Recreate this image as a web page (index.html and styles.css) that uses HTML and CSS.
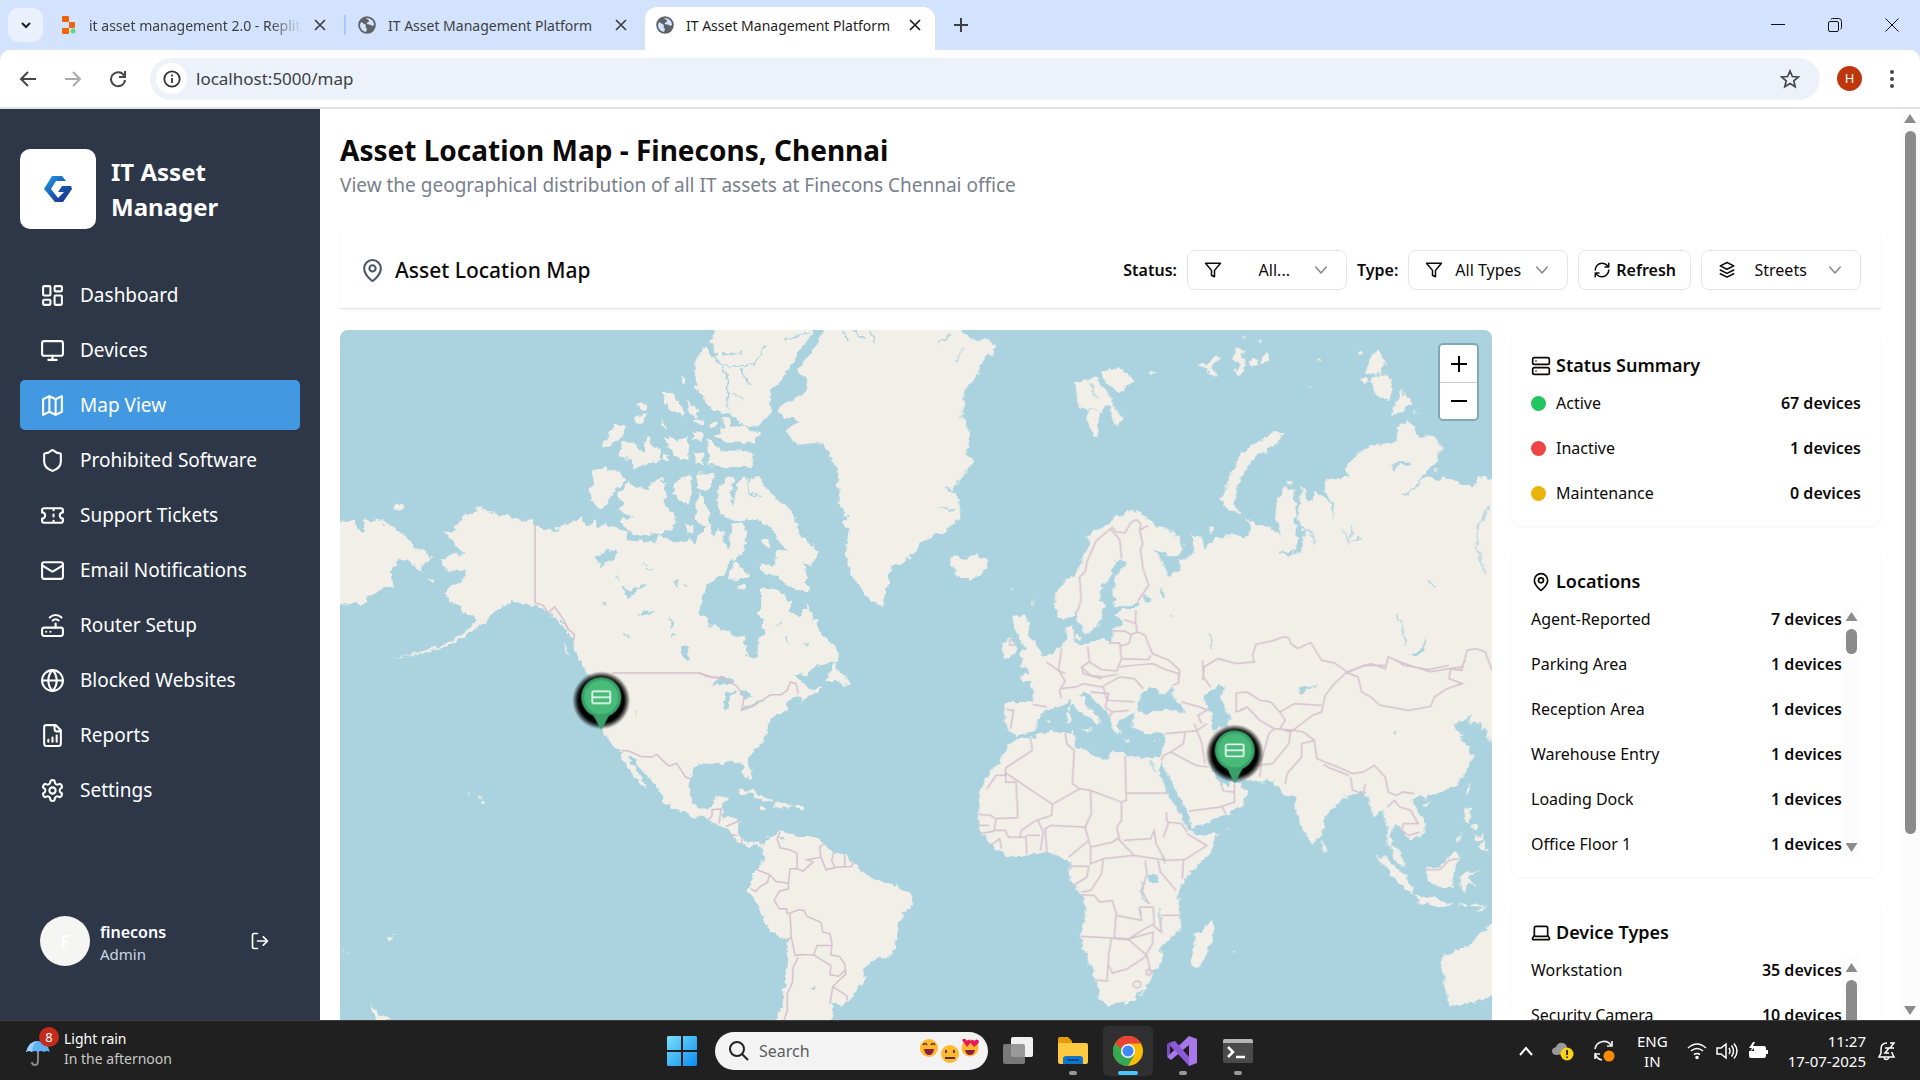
FILE: index.html
```html
<!DOCTYPE html>
<html lang="en">
<head>
<meta charset="utf-8">
<title>IT Asset Management Platform</title>
<link rel="stylesheet" href="styles.css">
</head>
<body>
<svg class="defs" aria-hidden="true">
  <symbol id="globe-fill" viewBox="0 0 18 18"><circle cx="9" cy="9" r="8.8" fill="#5f6368"/><path d="M3 6c2 1 3 2 5 3-1 2 0 3 1 4l-1 3C4 15 2 12 2 9zM8 2c1 2 3 1 3 3S8 6 9 8c2 1 4 0 5 2l2-1c0-4-3-7-8-7z" fill="#d3e3fd"/></symbol>
  <symbol id="close" viewBox="0 0 12 12"><path d="M1 1l10 10M11 1L1 11" fill="none" stroke="currentColor" stroke-width="1.7"/></symbol>
  <symbol id="pin" viewBox="0 0 24 24"><path d="M20 10c0 5-5.500 10.200-7.400 11.800a1 1 0 0 1-1.200 0C9.500 20.200 4 15 4 10a8 8 0 0 1 16 0z"/><circle cx="12" cy="10" r="3"/></symbol>
  <symbol id="funnel" viewBox="0 0 24 24"><path d="M22 3H2l8 9.500V19l4 2v-8.500z"/></symbol>
  <symbol id="chev" viewBox="0 0 24 24"><path d="m5 8 7 8 7-8"/></symbol>
</svg>

<header class="browser">
  <div class="tabs">
    <button class="tab-search" aria-label="Search tabs"><svg width="12" height="12" viewBox="0 0 12 12"><path d="m2 4 4 4 4-4" fill="none" stroke="#1f1f1f" stroke-width="2"/></svg></button>
    <div class="tab">
      <svg width="16" height="18" viewBox="0 0 16 18"><path d="M2 0h5q1 0 1 1v5H2q-1 0-1-1V1q0-1 1-1zM8 6h5q1 0 1 1v4q0 1-1 1H8zM2 12h6v5q0 1-1 1H2q-1 0-1-1v-4q0-1 1-1z" fill="#f26207"/><circle cx="12" cy="15" r="2.500" fill="#5fd97a"/></svg>
      <span class="tab-title fade">it asset management 2.0 - Replit</span>
      <button aria-label="Close tab"><svg width="12" height="12"><use href="#close"/></svg></button>
    </div>
    <div class="tab divided">
      <svg width="18" height="18"><use href="#globe-fill"/></svg>
      <span class="tab-title">IT Asset Management Platform</span>
      <button aria-label="Close tab"><svg width="12" height="12"><use href="#close"/></svg></button>
    </div>
    <div class="tab active">
      <svg width="18" height="18"><use href="#globe-fill"/></svg>
      <span class="tab-title">IT Asset Management Platform</span>
      <button aria-label="Close tab"><svg width="12" height="12"><use href="#close"/></svg></button>
    </div>
    <button class="new-tab" aria-label="New tab"><svg width="14" height="14" viewBox="0 0 14 14"><path d="M7 0v14M0 7h14" stroke="#3c4043" stroke-width="2"/></svg></button>
    <div class="window-controls">
      <button aria-label="Minimize"><svg width="14" height="14" viewBox="0 0 14 14"><path d="M0 6.500h14" stroke="#111"/></svg></button>
      <button aria-label="Restore"><svg width="14" height="14" viewBox="0 0 14 14" fill="none" stroke="#111"><rect x=".5" y="3.500" width="10" height="10" rx="1.500"/><path d="M3 1.500q0-1 1.500-1h6q3 0 3 3v6q0 1.500-1 1.500"/></svg></button>
      <button aria-label="Close"><svg width="14" height="14" viewBox="0 0 14 14"><path d="M.5.5l13 13M13.500.5l-13 13" stroke="#111"/></svg></button>
    </div>
  </div>
  <div class="toolbar">
    <button aria-label="Back"><svg width="18" height="18" viewBox="0 0 18 18" fill="none" stroke="#474747" stroke-width="2"><path d="M17 9H2M9 2 2 9l7 7"/></svg></button>
    <button aria-label="Forward"><svg width="18" height="18" viewBox="0 0 18 18" fill="none" stroke="#aaa" stroke-width="2"><path d="M1 9h15M9 2l7 7-7 7"/></svg></button>
    <button aria-label="Reload"><svg width="18" height="18" viewBox="0 0 18 18" fill="none" stroke="#474747" stroke-width="2"><path d="M15 5.500A7 7 0 1 0 16 10M16 1v6h-6"/></svg></button>
    <div class="omnibox">
      <button class="site-info" aria-label="Site information"><svg width="18" height="18" viewBox="0 0 18 18" fill="none" stroke="#333" stroke-width="1.800"><circle cx="9" cy="9" r="7.700"/><path d="M9 8v5M9 4.500v2"/></svg></button>
      <input type="text" aria-label="Address" value="localhost:5000/map">
      <button aria-label="Bookmark"><svg width="20" height="20" viewBox="0 0 20 20" fill="none" stroke="#474747" stroke-width="1.700"><path d="m10 2 2.400 5.500 6 .5-4.600 3.900 1.400 5.900-5.200-3.200-5.200 3.200 1.400-5.900L1.600 8l6-.5z"/></svg></button>
    </div>
    <button class="profile" aria-label="Profile">H</button>
    <button aria-label="Menu"><svg width="6" height="20" viewBox="0 0 6 20" fill="#474747"><circle cx="3" cy="3" r="2"/><circle cx="3" cy="10" r="2"/><circle cx="3" cy="17" r="2"/></svg></button>
  </div>
</header>

<div class="app">
  <aside class="sidebar">
    <div class="brand">
      <div class="brand-logo">
        <svg width="28" height="28" viewBox="0 0 28 28"><defs><linearGradient id="lg" x1="0" y1="0" x2="1" y2="1"><stop offset="0" stop-color="#1fa0e8"/><stop offset=".6" stop-color="#1b4fa8"/><stop offset="1" stop-color="#122f86"/></linearGradient></defs><path d="M8 1h10l4 5H12l-5 8 7 9 6-6h-6l4-6h9l1 3-9 13h-8L0 14z" fill="url(#lg)"/></svg>
      </div>
      <p class="brand-name">IT Asset<br>Manager</p>
    </div>
    <nav class="nav">
      <a href="#"><svg class="icon" viewBox="0 0 24 24"><rect x="3" y="3" width="7" height="9" rx="1"/><rect x="14" y="3" width="7" height="5" rx="1"/><rect x="14" y="12" width="7" height="9" rx="1"/><rect x="3" y="16" width="7" height="5" rx="1"/></svg>Dashboard</a>
      <a href="#"><svg class="icon" viewBox="0 0 24 24"><rect x="2" y="3" width="20" height="14" rx="2"/><path d="M8 21h8M12 17v4"/></svg>Devices</a>
      <a href="#" class="current" aria-current="page"><svg class="icon" viewBox="0 0 24 24"><path d="m3 6 6-3 6 3 6-3v15l-6 3-6-3-6 3zM9 3v15M15 6v15"/></svg>Map View</a>
      <a href="#"><svg class="icon" viewBox="0 0 24 24"><path d="M20 13c0 5-3.500 7.500-7.660 8.950a1 1 0 0 1-.67-.01C7.500 20.500 4 18 4 13V6a1 1 0 0 1 1-1c2 0 4.500-1.200 6.240-2.720a1.170 1.170 0 0 1 1.520 0C14.510 3.810 17 5 19 5a1 1 0 0 1 1 1z"/></svg>Prohibited Software</a>
      <a href="#"><svg class="icon" viewBox="0 0 24 24"><path d="M2 9a3 3 0 0 1 0 6v2a2 2 0 0 0 2 2h16a2 2 0 0 0 2-2v-2a3 3 0 0 1 0-6V7a2 2 0 0 0-2-2H4a2 2 0 0 0-2 2zM13 5v2M13 17v2M13 11v2"/></svg>Support Tickets</a>
      <a href="#"><svg class="icon" viewBox="0 0 24 24"><rect x="2" y="4" width="20" height="16" rx="2"/><path d="m22 7-8.970 5.700a1.940 1.940 0 0 1-2.060 0L2 7"/></svg>Email Notifications</a>
      <a href="#"><svg class="icon" viewBox="0 0 24 24"><rect x="2" y="14" width="20" height="8" rx="2"/><path d="M6.010 18H6M10.010 18H10M15 10v4M17.840 7.170a4 4 0 0 0-5.660 0M20.660 4.340a8 8 0 0 0-11.310 0"/></svg>Router Setup</a>
      <a href="#"><svg class="icon" viewBox="0 0 24 24"><circle cx="12" cy="12" r="10"/><path d="M12 2a14.500 14.500 0 0 0 0 20 14.500 14.500 0 0 0 0-20M2 12h20"/></svg>Blocked Websites</a>
      <a href="#"><svg class="icon" viewBox="0 0 24 24"><path d="M15 2H6a2 2 0 0 0-2 2v16a2 2 0 0 0 2 2h12a2 2 0 0 0 2-2V7zM14 2v4a2 2 0 0 0 2 2h4M8 18v-2M12 18v-4M16 18v-6"/></svg>Reports</a>
      <a href="#"><svg class="icon" viewBox="0 0 24 24"><path d="M12.220 2h-.44a2 2 0 0 0-2 2v.18a2 2 0 0 1-1 1.730l-.43.25a2 2 0 0 1-2 0l-.15-.08a2 2 0 0 0-2.730.73l-.22.38a2 2 0 0 0 .73 2.730l.15.1a2 2 0 0 1 1 1.720v.51a2 2 0 0 1-1 1.740l-.15.09a2 2 0 0 0-.73 2.730l.22.38a2 2 0 0 0 2.730.73l.15-.08a2 2 0 0 1 2 0l.43.25a2 2 0 0 1 1 1.730V20a2 2 0 0 0 2 2h.44a2 2 0 0 0 2-2v-.18a2 2 0 0 1 1-1.730l.43-.25a2 2 0 0 1 2 0l.15.08a2 2 0 0 0 2.730-.73l.22-.39a2 2 0 0 0-.73-2.730l-.15-.08a2 2 0 0 1-1-1.740v-.5a2 2 0 0 1 1-1.740l.15-.09a2 2 0 0 0 .73-2.730l-.22-.38a2 2 0 0 0-2.730-.73l-.15.08a2 2 0 0 1-2 0l-.43-.25a2 2 0 0 1-1-1.730V4a2 2 0 0 0-2-2z"/><circle cx="12" cy="12" r="3"/></svg>Settings</a>
    </nav>
    <div class="user">
      <span class="user-avatar">F</span>
      <div class="user-info"><strong>finecons</strong><span>Admin</span></div>
      <button class="logout" aria-label="Log out"><svg class="icon small" viewBox="0 0 24 24"><path d="M9 21H5a2 2 0 0 1-2-2V5a2 2 0 0 1 2-2h4M16 17l5-5-5-5M21 12H9"/></svg></button>
    </div>
  </aside>

  <main class="main">
    <h1>Asset Location Map - Finecons, Chennai</h1>
    <p class="subtitle">View the geographical distribution of all IT assets at Finecons Chennai office</p>

    <section class="filters">
      <h2><svg class="icon slate" viewBox="0 0 24 24"><use href="#pin"/></svg>Asset Location Map</h2>
      <label for="status">Status:</label>
      <div class="select"><svg class="icon mini" viewBox="0 0 24 24"><use href="#funnel"/></svg><select id="status" class="end"><option>All...</option></select><svg class="icon mini muted"><use href="#chev"/></svg></div>
      <label for="type">Type:</label>
      <div class="select"><svg class="icon mini" viewBox="0 0 24 24"><use href="#funnel"/></svg><select id="type"><option>All Types</option></select><svg class="icon mini muted"><use href="#chev"/></svg></div>
      <button class="refresh"><svg class="icon mini" viewBox="0 0 24 24"><path d="M3 12a9 9 0 0 1 9-9 9.750 9.750 0 0 1 6.740 2.740L21 8M21 3v5h-5M21 12a9 9 0 0 1-9 9 9.750 9.750 0 0 1-6.740-2.740L3 16M8 16H3v5"/></svg>Refresh</button>
      <div class="select"><svg class="icon mini" viewBox="0 0 24 24"><path d="m12 2 9 4.500-9 4.500-9-4.500zM3 12l9 4.500 9-4.500M3 17l9 4.500 9-4.500"/></svg><select aria-label="Map style"><option>Streets</option></select><svg class="icon mini muted"><use href="#chev"/></svg></div>
    </section>

    <div class="columns">
      <section class="map" aria-label="World map of devices">
        <svg class="map-canvas" viewBox="0 0 1151 750">
          <defs>
            <filter id="coast" x="0" y="0" width="100%" height="100%"><feTurbulence type="fractalNoise" baseFrequency=".14" numOctaves="3" seed="4"/><feDisplacementMap in="SourceGraphic" scale="8" xChannelSelector="R" yChannelSelector="G"/></filter>
            <radialGradient id="glow"><stop offset=".78" stop-color="#000"/><stop offset=".86" stop-color="#000" stop-opacity=".7"/><stop offset="1" stop-color="#000" stop-opacity="0"/></radialGradient>
            <g id="marker"><circle cy="3" r="29" fill="url(#glow)"/><path d="M-8 18h16L0 33z" fill="#38a169"/><circle r="20" fill="#38a169"/><circle r="17" fill="#48bb78"/><g fill="none" stroke="#fff" stroke-width="1.500"><rect x="-9" y="-6" width="18" height="12" rx="1.500"/><path d="M-9 0H9"/></g></g>
          </defs>
          <rect width="1151" height="750" fill="#aad3df"/>
          <g filter="url(#coast)">
            <g transform="scale(.3827 .3333)">
              <g class="land">
                <path d="M-30 582L40 572 45 600 60 605 62 568 110 575 135 590 160 612 190 640 200 658 220 658 240 685 222 697 212 728 195 705 170 695 150 685 148 710 130 720 142 772 120 768 95 785 75 800 55 825 45 818 20 822-30 828Z"/>
                <path d="M135 540L143 523 160 518 170 530 160 540ZM222 745l25 5 2 8-15-4z"/>
                <path d="M272 605L300 603 308 575 325 555 345 542 365 530 385 545 430 555 480 570 500 572 510 582 540 597 560 605 575 590 600 580 622 566 630 555 640 580 650 588 665 570 670 585 700 578 715 592 750 605 752 630 775 635 800 632 825 640 830 610 850 625 875 635 905 632 910 620 925 640 940 610 965 585 975 620 985 595 1000 610 1005 640 1015 650 1025 580 1045 577 1063 600 1060 640 1050 670 1020 690 1010 725 975 755 960 765 945 800 940 850 955 860 962 885 990 892 1020 912 1055 922 1058 960 1078 992 1088 975 1088 930 1105 910 1108 880 1092 850 1100 830 1098 775 1135 773 1160 795 1175 815 1175 845 1200 860 1212 845 1218 815 1230 850 1248 890 1260 915 1290 945 1302 970 1300 985 1270 1000 1230 1010 1190 1015 1160 1055 665 1055 640 1020 628 995 612 965 605 925 585 900 560 860 540 845 510 825 470 822 450 808 425 835 400 845 385 870 350 900 320 925 260 955 200 975 130 985 195 970 260 948 320 910 350 885 355 860 320 850 315 825 285 815 275 790 290 765 325 745 325 722 280 720 262 693 290 675 330 672 310 655 295 630Z"/>
                <path d="M1302 985L1295 1010 1325 1055 1265 1055 1285 1020ZM585 940l15 40-12-12z"/>
                <path d="M663 418L690 410 730 425 748 450 715 485 700 510 680 535 652 505ZM720 490L755 458 800 480 815 460 835 442 848 460 848 520 880 570 860 600 800 615 765 610 730 575 770 560 725 540 740 520ZM735 330L760 335 790 365 805 315 815 350 838 350 835 390 770 412 760 390 728 380ZM680 350L715 290 742 285 735 320 700 350ZM850 320L880 335 908 320 910 390 888 390 860 355ZM925 370L945 368 950 405 928 400ZM960 325L985 345 1000 365 1050 360 1080 370 1078 410 1000 412 965 405ZM980 325L1000 290 1060 290 1097 310 1085 340 1000 330Z"/>
                <path d="M840 185L860 185 895 230 895 262 860 240ZM905 210L935 240 930 262 912 250ZM770 230L795 215 803 238ZM768 260L800 252 790 285 770 278ZM920 303L950 315 945 335 925 325ZM926 268h25v10h-22zM972 272l12 8-4 14-10-4zM890 138l10 2 2 18-8-3zM837 265l14 30-7 2zM845 378h10v12h-10zM1000 262l18 5 10 30-20-5z"/>
                <path d="M870 465L915 430 922 490 905 527 870 490ZM932 430L980 432 965 480 932 475ZM930 520L940 485 965 560 960 590 925 570ZM905 580l20 12 0 18-22-5z"/>
                <path d="M990 470L1010 440 1030 440 1020 490 1025 530 1035 460 1060 442 1100 445 1115 480 1160 520 1185 550 1200 610 1250 665 1230 710 1210 690 1225 780 1215 790 1170 765 1140 745 1095 715 1100 700 1135 705 1140 660 1170 660 1150 640 1130 600 1090 565 1040 570 995 555 985 520Z"/>
                <path d="M1015 750L1030 690 1070 740 1050 745ZM1103 630L1120 622 1122 648 1105 645ZM1040 770l14-6 4 8-14 5z"/>
                <path d="M990-20L968 35 985 70 975 80 950 55 925 100 930 170 945 200 975 245 1015 250 1050 285 1090 290 1125 250 1125 180 1140 165 1180 100 1210 50 1245-20Z"/>
                <path d="M1265-20L1240 60 1225 70 1195 125 1220 145 1220 180 1200 195 1145 235 1160 265 1205 275 1160 300 1195 345 1245 338 1275 360 1295 410 1305 520 1325 560 1310 580 1330 595 1322 640 1325 700 1345 750 1375 800 1415 830 1425 790 1440 710 1490 685 1520 630 1580 605 1580-20Z"/>
              </g>
              <g class="water">
                <path d="M660 680L700 660 722 665 715 690 680 710ZM735 768L755 778 800 765 750 807ZM884 948L905 950 920 1005 900 990ZM778 858l18-18 22 0-22 14zM860 860l10 15-2 20-8-5z"/>
              </g>
              <g class="channel">
                <path d="M965 60L985 95 1020 110 1080 105 1110 50M1045 115L1070 165M1000 110L1012 150 1012 240M1015 185L1055 210M1000 75L1050 65M1160 30l60-20M1310 0l15 35M1340 0l30 30M1385 0l12 35M1520 25l48-25M1065 440l5 50 30 10"/>
                <path d="M560 860l25 60M575 870l20 30M790 705l30 10M875 750l5 20M900 760l5 10M690 815l0 10M720 740l10 8M865 930l10-20M740 915h15M1140 880h15M1165 915l5 25M1210 940l15 5"/>
              </g>
            </g>
            <g transform="translate(0 330) scale(.3954 .3333)">
              <g class="land">
                <path d="M612-5L630 20 655 45 650 100 648 160 660 205 668 225 680 245 710 270 718 300 735 335 755 365 775 388 768 370 750 335 735 305 728 288 740 288 750 315 775 345 800 380 815 405 815 425 850 448 890 470 910 465 930 480 945 490 975 500 990 525 1010 545 1035 560 1050 550 1065 562 1070 555 1060 545 1040 543 1030 550 1015 535 1005 515 1010 480 1000 470 965 475 965 445 980 408 950 408 940 440 910 445 890 425 882 390 885 350 890 325 915 308 950 312 1000 302 1015 310 1020 335 1035 362 1040 345 1030 300 1040 275 1075 240 1078 215 1085 180 1100 165 1130 145 1128 125 1145 115 1165 105 1168 120 1190 105 1222 80 1205 80 1185 90 1165 60 1150 45 1180 40 1200 15 1230 12 1262-5Z"/>
                <path d="M1250 0L1255 30 1280 45 1285 75 1255 65 1230 60 1238 30Z"/>
                <path d="M1068 560L1082 528 1100 520 1118 512 1140 520 1160 530 1195 530 1215 535 1222 550 1245 575 1275 582 1298 600 1312 630 1330 645 1370 668 1405 675 1430 695 1445 705 1448 730 1430 755 1412 785 1410 820 1402 855 1388 890 1360 895 1325 920 1325 960 1310 985 1285 1020 1270 1037 1240 1030 1250 1065 1240 1085 1220 1290 1070 1290 1100 1080 1118 1040 1122 980 1130 900 1128 840 1080 800 1062 755 1045 710 1030 690 1035 660 1050 628 1068 605Z"/>
                <path d="M1003 400L1015 388 1045 392 1095 422 1070 420 1045 400ZM1100 425L1145 440 1120 444 1100 440ZM1058 440h16v6h-16zM1156 440h14v6h-14zM358 422l10 5-6 8-5-3zM350 408l8 5-5 4zM322 397l8 4-4 3zM118 832l8-4 6 6-8 6zM130 820l10-2-4 6zM0 862l24 22-10-6zM78 1033L100 1060 130 1080 95 1085Z"/>
              </g>
              <g class="water"><path d="M933 76L965 48 1000 58 990 75 962 72ZM970 98L1003 88 988 108 985 145 974 152 970 120ZM1005 85L1040 98 1028 118 1012 105ZM1012 150L1040 132 1072 118 1050 136ZM1112 525l8 5 2 14-8-4zM745 152l6 8 2 6-6-6zM1193 980h8v8h-8z"/></g>
            </g>
            <g transform="translate(590 0) scale(.3635 .3333)">
              <g class="land">
                <path d="M-40-20L60-20 130 40 150 20 180 50 165 75 135 100 130 130 95 180 85 260 110 310 100 370 118 390 90 440 60 470 80 520 82 555 65 580 30 610-40 622Z"/>
                <path d="M398 155L430 150 455 140 470 165 500 205 495 225 470 235 458 322 430 280 428 240 405 225ZM470 125L515 112 558 150 520 188 480 155ZM495 220L528 265 515 290 498 265ZM600 130l10-8 10 6-12 10z"/>
                <path d="M735 105l30-10 25-25 5 20-25 25 20 25-30-18zM825 90l20-40 18 10-8 25 15 20-20 35-15-15 20-20zM875 95l20-10 5 15-20 15zM908 90l20-25 2 25-18 10zM860 18l10 5-8 4zM902 28l12 5-10 5zM1062 88h12v6h-12zM1175 68l12-4 2 10h-12zM1038 164l12 8-4 2z"/>
                <path d="M945 305L968 310 960 335 900 375 870 410 845 465 835 520 855 552 820 540 797 510 820 450 845 385 885 345Z"/>
                <path d="M1228 60L1250 95 1235 130 1195 130 1205 95ZM1210 140L1240 130 1270 150 1265 210 1220 195ZM1185 140l20 10-6 14-14-8zM1295 178L1322 222 1268 258ZM765 590l12-2 2 14-12 8zM978 455l14 2-2 10-12-2zM1388 410l14 8-10 10zM1330 238l12 10h-10z"/>
                <path d="M55 680L70 675 80 690 130 675 158 690 155 720 110 748 70 735 60 710Z"/>
                <path d="M225 860L260 855 272 885 265 910 290 940 308 970 300 1005 240 1010 258 985 245 975 262 950 235 905ZM195 940L225 922 235 965 200 988ZM398 912l14 2v16l-12-2zM278 810l5 4-3 10zM220 775l8 4-4 6z"/>
                <path d="M345 855L342 790 375 745 405 725 420 680 440 640 430 620 470 590 520 555 560 538 595 562 620 590 665 600 695 650 685 680 650 675 610 655 635 690 640 715 655 740 685 715 685 690 720 675 725 640 718 615 745 620 750 655 780 630 820 615 870 618 885 595 865 560 890 580 930 590 965 622 948 560 950 525 970 472 1003 475 1003 600 1012 625 1000 675 1015 660 1030 600 1015 590 1010 540 1020 465 1040 520 1060 490 1095 510 1110 575 1105 515 1085 485 1080 450 1145 440 1145 400 1200 350 1280 335 1285 290 1315 272 1340 320 1385 318 1405 355 1390 395 1335 460 1370 440 1400 450 1430 443 1460 465 1500 465 1505 440 1580 455 1580 1055 250 1055 250 1040 290 1020 315 990 350 955 375 930 372 895 390 880 395 930 415 945 440 935 480 925 500 935 500 895 530 875 505 850 540 835 570 830 570 818 510 828 500 800 510 740 540 700 530 688 510 690 495 740 465 780 465 810 478 825 455 895 425 915 405 870 405 845 375 865Z"/>
              </g>
              <g class="water"><path d="M1310 985L1345 960 1365 912 1355 965 1330 985ZM590 795l22 10-8 20-16-8zM632 770l14 25-6 10-10-20zM1265 405l45-15 10 12-35 5-8 20zM965 665l35-5-10 18zM655 850l15 10-6 3z"/></g>
              <g class="channel"><path d="M965 665l40 5 15-30 12-40 15 5 5 35M1160 590l-12 50M1135 590l8 40M1150 630l30-5M1300 495l50-35M1535 530q-60 90-8 200M1280 850l15 30 10 70M770 910l0 40M1370 750l15 20M20 40l40-30M65 100l25-50M40 470l30 15M20 530l50 10M440 160l15 40M430 240l20-5"/></g>
            </g>
            <g transform="translate(590 330) scale(.3635 .3333)">
              <g class="land">
                <path d="M260-10L1580-10 1580 220 1543 245 1520 205 1485 215 1455 225 1490 290 1470 340 1440 380 1405 395 1370 405 1365 420 1345 410 1325 420 1335 450 1358 480 1360 515 1318 548 1300 515 1275 490 1262 520 1270 560 1290 575 1308 625 1280 605 1265 560 1250 540 1260 500 1240 450 1220 470 1205 410 1185 395 1145 405 1105 445 1080 475 1075 525 1050 553 1030 525 1005 450 1000 410 970 405 960 385 940 360 890 365 850 355 800 325 765 300 775 330 795 365 835 365 875 395 850 440 800 470 720 505 708 460 680 400 655 350 635 310 632 285 640 265 648 220 590 218 555 200 560 160 545 165 515 180 520 225 500 205 490 160 460 130 430 95 410 100 430 135 468 178 455 200 440 175 400 145 385 118 355 135 322 148 292 180 290 215 235 225 205 210 205 125 282 125 280 60 245 45 275 35Z"/>
                <path d="M240 235L275 235 320 215 395 215 400 240 395 255 440 280 485 300 500 270 530 280 570 295 605 290 635 290 628 330 650 395 675 440 712 510 735 525 792 515 770 575 720 630 680 690 685 755 690 800 660 835 632 860 640 905 610 930 600 970 560 1020 485 1035 470 1020 455 960 435 900 410 830 428 760 415 700 380 655 385 600 350 590 340 575 260 585 215 592 170 555 130 500 135 430 130 400 160 340 205 285 215 250Z"/>
                <path d="M725 820L760 800 775 772 785 805 765 870 740 922 718 912 718 880 725 860ZM1075 540L1092 570 1078 578ZM1355 430L1375 425 1365 443ZM1468 395L1485 362 1478 400ZM1470 440L1488 445 1480 490 1468 485ZM1485 492l20 5-5 15-15-8zM1490 520l15 8 10-10 5 20-20 5zM1505 558L1525 540 1530 575ZM1225 582L1260 600 1300 640 1328 680 1326 702 1290 675 1250 620ZM1328 705L1380 712 1440 732 1400 737 1340 722ZM1450 732h25v6h-25zM1485 732h40v5h-40zM1500 750l35-15-20 18zM1360 625L1400 620 1440 570 1455 590 1440 620 1435 680 1395 680 1368 660ZM1455 650L1470 638 1515 628 1480 645 1497 685 1478 668 1465 700ZM1443 545l25-35-20 40z"/>
                <path d="M1580 780L1540 792 1500 830 1480 855 1410 885 1403 920 1420 1000 1425 1035 1450 1040 1490 1025 1543 1005 1580 1000Z"/>
                <path d="M413 206L442 203 436 217ZM374 160L386 162 384 190 374 188ZM377 136h7v20h-7zM525 236L550 240 540 244ZM610 243L625 238 618 248ZM318 180h8v4h-8zM832 870l6 0 0 6-6 0zM815 505h8v4h-8z"/>
              </g>
              <g class="water"><path d="M568 150L575 110 600 82 625 90 640 105 668 75 660 100 700 155 640 148 590 160ZM752 105L790 75 812 80 795 110 805 140 825 160 815 200 775 210 775 165 755 130ZM1440 195L1485 165 1480 190 1510 185 1525 235 1460 222ZM600 642L625 645 620 668 602 665ZM1012 95l15-18 40 2-35 6-10 15zM710 55l5 8M850 150l8-5v10zM1268 212h8v8h-8zM765 300l30 30 35 25-10 22-25-8-20-35z"/></g>
              <g class="channel"><path d="M580 660l5 50 15 20M570 740l5 20M628 745l5 50M605 300l15 35M640 590l8 20"/></g>
            </g>
          </g>
          <g class="border" transform="scale(.3827 .3333)"><path d="M509 582V818L530 825 543 848 560 830 580 862 597 898 612 912 610 930M710 1028H940L955 1038 1010 1048"/></g>
          <g class="border" transform="translate(0 330) scale(.3954 .3333)"><path d="M905 38L940 50 970 52 1000 75 1022 105 1015 150 1050 132 1088 103 1115 103 1130 90 1138 65 1152 70 1158 100M710 270L730 272 760 288 788 290 800 282 815 300 832 317 850 308 865 335 873 350 885 355M930 480L940 465 940 448 965 445M958 490L962 448M975 498L1010 480M990 523L1003 525M1015 535V550M1112 515L1104 535 1112 562 1135 568 1155 578 1155 625 1170 632 1195 605 1180 598 1215 590 1212 560 1222 550M1215 590L1228 628 1255 620 1292 618 1298 600M1247 578L1242 600 1250 620M1275 583V617M1053 628L1085 642 1102 663 1133 668 1137 625 1155 625M1085 642L1080 665 1060 680 1050 693 1038 685M1133 668V685L1110 692 1097 720 1110 745 1128 745 1130 760 1160 748 1172 750 1180 768 1215 785 1220 815 1238 820 1243 850 1240 883 1262 888 1275 910 1278 940 1245 978 1238 1030M1137 760L1140 830 1130 838M1140 830L1150 885 1165 882 1197 883 1205 855 1240 855M1197 883L1240 915 1238 942 1260 947 1275 930M1245 978L1280 1005 1282 1020M1158 890L1145 920 1143 965 1130 1000 1130 1050 1120 1085"/></g>
          <g class="border" transform="translate(590 0) scale(.3635 .3333)"><path d="M403 845L414 810 410 740 425 725 430 695 455 632 490 600 500 592 510 605 535 608 550 578 565 568 578 580 575 600 598 586M495 597L520 628 525 685M575 600L583 640 577 660 585 720 600 765 570 812M565 840L563 870 568 905 590 915 600 945 610 970 655 990 685 1020 682 1050M500 902L535 903 552 913 568 905M552 913L545 940 520 948M490 938H520L525 985 600 988 605 975M432 948L437 995 470 1018 512 1022 525 985M360 955L352 1020M318 995L350 1020 370 1030M437 995L415 1010 420 1030 470 1045M748 1050L752 1010 790 985 840 1000 890 995 885 975 895 942 940 932 970 920 985 922 990 940 1010 955 1045 937 1075 990 1110 998 1145 1025 1210 1000 1250 1015 1258 980 1290 995 1325 1008 1375 1025 1425 1015 1460 1020 1475 960 1500 955 1525 965 1543 1020M533 868l30 12M218 925v20h15"/></g>
          <g class="border" transform="translate(590 330) scale(.3635 .3333)"><path d="M208 147L228 150 220 205M280 132L320 140M352 30L370 62 355 90 360 115M355 85L400 80 420 70 470 80 520 50M415 20L440 45 475 50 515 42M475 80L485 120 560 125M520 50L560 55 585 85M520 20L560 15 612 10 640 25 682 40 682 68 665 75M440 95L490 100 480 140 500 155 545 150M500 155L490 170M645 220L730 212 760 190M690 125L740 140 760 150 735 165 745 190M725 190L745 245 755 310M700 215L695 250 660 275 640 285 635 300M660 275L730 315 765 320M748 0L750 50 770 80M840 155V98L870 95 905 120 935 125 960 155 1000 130 1075 135M840 155L855 150 870 140 905 180 945 205 930 220 910 300 905 350M945 205L1000 210 1025 215 1055 240M960 155L975 180 960 205 990 215 1020 190 1050 165 1075 155 1085 105 1110 70 1140 40M990 210L985 250 940 310 900 315M1055 240L1020 250 1020 290 980 340 975 370M1055 240L1062 295 1085 305 1130 325 1160 340 1190 335 1220 315 1250 350 1258 395 1280 405 1300 395 1330 400M1080 312L1095 322 1150 345M1155 350L1160 390 1190 400 1195 370M1140 35L1175 50 1185 95 1210 110 1235 135 1315 150 1375 138 1385 110 1420 85 1462 70 1425 55 1430 25 1460 20 1470 0M1140 40L1190 15 1250 15M1280 0L1300 15 1370 28 1425 15M1255 440L1275 420 1290 440 1320 450 1340 490 1300 490 1295 510 1315 525 1345 515M1360 628L1400 628 1425 600 1450 595M535 285L538 420 525 425M538 398H652M370 218L375 250 395 270 390 370 410 385 440 390 525 425V480L512 500 520 540 560 585M275 235L280 270 207 322 205 345 180 345 155 385M207 338L335 432 410 385M235 365L240 472 180 475 165 465 132 462M235 365H207V340M335 432L333 465 290 480 250 510 245 530M440 390L442 460 425 500 330 495 315 505 320 575M295 480L310 515 302 570M265 525H300M262 525L265 580M180 475L175 510 205 510 215 530 260 530M130 495H160M165 555L190 535 195 565M135 520L175 512M425 500L435 540 380 590M435 540L440 560 500 545 520 530M385 617L435 618 430 650 385 680M440 560L440 610 475 595 560 585 650 600 700 597 760 555 705 520M530 540L605 535 615 510 620 550 645 600M475 595L470 640 440 690 415 695M415 703L450 705 465 725 500 720 512 765 580 780 575 740 612 740 615 790 580 810 545 835 505 832 510 765M590 600L595 640 580 690 600 730M695 597L692 655M625 600L632 635 675 690M635 765H685M412 828L490 832 545 838M497 835L490 880 485 962 455 958M545 838L595 885 575 900 540 925 500 938 490 915M595 885L605 935M545 835L612 815 610 850 590 885M612 795L635 815 630 775M710 452L795 440 835 425 835 370M800 435L812 462M800 375L805 392 835 395M648 455L650 485 690 490 705 515M655 485L640 530"/><ellipse cx="568" cy="972" rx="11" ry="10"/><ellipse cx="600" cy="935" rx="7" ry="8"/></g>
          <use href="#marker" x="261" y="367"/>
          <use href="#marker" x="894" y="420"/>
        </svg>
        <div class="zoom">
          <button aria-label="Zoom in"><svg width="16" height="16" viewBox="0 0 16 16"><path d="M8 0v16M0 8h16" stroke="#000" stroke-width="2"/></svg></button>
          <button aria-label="Zoom out"><svg width="16" height="16" viewBox="0 0 16 16"><path d="M0 8h16" stroke="#000" stroke-width="2"/></svg></button>
        </div>
      </section>

      <div class="panels">
        <section class="card">
          <h3><svg class="icon small" viewBox="0 0 24 24"><rect x="2" y="2" width="20" height="8" rx="2"/><rect x="2" y="14" width="20" height="8" rx="2"/><path d="M6 6h.010M6 18h.010"/></svg>Status Summary</h3>
          <ul>
            <li><span class="dot green"></span>Active<b>67 devices</b></li>
            <li><span class="dot red"></span>Inactive<b>1 devices</b></li>
            <li><span class="dot yellow"></span>Maintenance<b>0 devices</b></li>
          </ul>
        </section>
        <section class="card">
          <h3><svg class="icon small" viewBox="0 0 24 24"><use href="#pin"/></svg>Locations</h3>
          <div class="scroll-area">
            <ul>
              <li>Agent-Reported<b>7 devices</b></li>
              <li>Parking Area<b>1 devices</b></li>
              <li>Reception Area<b>1 devices</b></li>
              <li>Warehouse Entry<b>1 devices</b></li>
              <li>Loading Dock<b>1 devices</b></li>
              <li>Office Floor 1<b>1 devices</b></li>
            </ul>
            <div class="scrollbar"><i class="up"></i><i class="thumb short"></i><i class="down"></i></div>
          </div>
        </section>
        <section class="card">
          <h3><svg class="icon small" viewBox="0 0 24 24"><rect x="4" y="4" width="16" height="12" rx="2"/><path d="M4 15l-2 3q-1 2 1 2h18q2 0 1-2l-2-3"/></svg>Device Types</h3>
          <div class="scroll-area">
            <ul>
              <li>Workstation<b>35 devices</b></li>
              <li>Security Camera<b>10 devices</b></li>
            </ul>
            <div class="scrollbar"><i class="up"></i><i class="thumb"></i><i class="down"></i></div>
          </div>
        </section>
      </div>
    </div>
  </main>
  <div class="scrollbar page"><i class="up"></i><i class="thumb"></i><i class="down"></i></div>
</div>

<footer class="taskbar">
  <div class="weather">
    <div class="weather-icon"><svg width="26" height="32" viewBox="0 0 26 32"><path d="M13 14v12q0 4-3 4t-3-3" fill="none" stroke="#888" stroke-width="2"/><path d="M1 17Q4 6 13 6t12 11q-3-2-6 0-3-2-6 0-3-2-6 0-3-2-6 0z" fill="#5fb0f5"/><path d="M13 6q-6 3-6 11-3-2-6 0Q4 6 13 6z" fill="#9fd0fb"/></svg><span class="badge">8</span></div>
    <p>Light rain<br><span>In the afternoon</span></p>
  </div>
  <div class="dock">
    <button aria-label="Start"><svg width="30" height="30" viewBox="0 0 30 30"><defs><linearGradient id="win" x2="1" y2="1"><stop stop-color="#7be0fb"/><stop offset="1" stop-color="#0a8cf0"/></linearGradient></defs><path d="M1 0h13v14H0V1zM16 0h13l1 1v13H16zM0 16h14v14H1l-1-1zM16 16h14v13l-1 1H16z" fill="url(#win)"/></svg></button>
    <label class="search">
      <svg width="20" height="20" viewBox="0 0 20 20" fill="none" stroke="#222" stroke-width="2"><circle cx="8" cy="8" r="7"/><path d="m13 13 6 6"/></svg>
      <input type="search" placeholder="Search" aria-label="Search">
      <svg width="60" height="26" viewBox="0 0 60 26"><circle cx="9" cy="10" r="9" fill="#ffb92e"/><path d="M4 11h10q-1 6-5 6t-5-6z" fill="#8a1d4c"/><path d="M3 7q2-3 4 0M11 7q2-3 4 0" fill="none" stroke="#533" stroke-width="1.500"/><circle cx="30" cy="16" r="9" fill="#ffb92e"/><path d="M25 20h10M26 12v3M34 12v3" stroke="#533" stroke-width="1.800"/><circle cx="50" cy="10" r="8.500" fill="#ffb92e"/><path d="M42 2q3-3 5 1 2-3 4 1l-4 5zM50 4q2-4 4-1 3-3 5 0 0 3-5 6z" fill="#e8175c"/><path d="M45 12h10q-1 5-5 5t-5-5z" fill="#8a1d4c"/></svg>
    </label>
    <button aria-label="Task view"><svg width="30" height="28" viewBox="0 0 30 28"><rect x="8" y="0" width="22" height="20" rx="2" fill="#f0f0f0"/><rect x="0" y="7" width="22" height="20" rx="2" fill="#8a8a8a" opacity=".85"/></svg></button>
    <button class="running" aria-label="File Explorer"><svg width="32" height="28" viewBox="0 0 32 28"><path d="M1 2q0-2 2-2h8l4 4v6H1z" fill="#e39a0c"/><path d="M1 6h28q2 0 2 2v17q0 2-2 2H3q-2 0-2-2z" fill="#ffca3f"/><path d="M6 27v-5q0-3 3-3h14q3 0 3 3v5z" fill="#1075c9"/><path d="M10 23h12" stroke="#0a4b8a" stroke-width="2"/></svg></button>
    <button class="running open" aria-label="Chrome"><svg width="30" height="30" viewBox="0 0 30 30"><circle cx="15" cy="15" r="15" fill="#fbbc05"/><path d="M2 7.500A15 15 0 0 0 15 30l6.500-11-13-.3z" fill="#34a853"/><path d="M2 7.500l6.500 11L15 7.500z" fill="#34a853"/><path d="M2 7.500A15 15 0 0 1 28 7.500H15l-7 5z" fill="#ea4335"/><circle cx="15" cy="15" r="7" fill="#fff"/><circle cx="15" cy="15" r="5.500" fill="#4285f4"/></svg></button>
    <button class="running" aria-label="Visual Studio"><svg width="32" height="30" viewBox="0 0 32 30"><path d="M0 8l3-2 20 17v7L3 10v11l-3-1z" fill="#7b4bc4"/><path d="M0 21L22 0l8 3v24l-8 3V9L4 24z" fill="#a877ea"/><path d="M4 6l4-1 14 16v9L4 10z" fill="#8d5ad6"/></svg></button>
    <button class="running" aria-label="Terminal"><svg width="30" height="24" viewBox="0 0 30 24"><rect width="30" height="24" rx="2" fill="#4b4b4b"/><path d="M2 0h26q2 0 2 2v2H0V2q0-2 2-2z" fill="#b5b5b5"/><path d="m5 8 5 5-5 5M13 18h9" fill="none" stroke="#fff" stroke-width="2.500"/></svg></button>
  </div>
  <div class="tray">
    <svg width="14" height="10" viewBox="0 0 14 10"><path d="m1 9 6-7 6 7" fill="none" stroke="#fff" stroke-width="2"/></svg>
    <svg class="gap-l" width="22" height="20" viewBox="0 0 22 20"><path d="M5 14q-5 0-5-4 0-3 4-4 2-5 7-4 4 1 4 5 3 2 2 5z" fill="#9a9a9a"/><circle cx="15" cy="13" r="6.500" fill="#fcd116"/><path d="M15 9v5M15 15.500v1.500" stroke="#222" stroke-width="1.800"/></svg>
    <svg class="gap-l" width="22" height="22" viewBox="0 0 22 22"><path d="M2 9a9 9 0 0 1 16-4M19 1v5h-5M2 13q1 6 7 7M2 19v-5h5" fill="none" stroke="#eee" stroke-width="1.700"/><circle cx="16" cy="16" r="5.500" fill="#ff8c00"/></svg>
    <p class="lang">ENG<br>IN</p>
    <svg class="gap-l" width="20" height="18" viewBox="0 0 20 18" fill="none" stroke="#fff" stroke-width="1.600"><path d="M1 6q9-8 18 0M4 9q6-5 12 0M7 12.500q3-2 6 0"/><circle cx="10" cy="15.500" r="1"/></svg>
    <svg width="22" height="18" viewBox="0 0 22 18" fill="none" stroke="#fff" stroke-width="1.500"><path d="M1 6h4l5-4v14l-5-4H1zM13 6q2 3 0 6M15.500 3.500q4 5.500 0 11M18 1.500q6 7.500 0 15"/></svg>
    <svg width="22" height="18" viewBox="0 0 22 18"><path d="M7 4h10q2 0 2 2v8q0 2-2 2H4q-2 0-2-2V9h5z" fill="#fff"/><path d="M19 8h2v4h-2zM6 0L2 6h3L3 10l6-6H6l2-4z" fill="#fff"/></svg>
    <p class="clock">11:27<br>17-07-2025</p>
    <svg width="18" height="20" viewBox="0 0 18 20" fill="none" stroke="#fff" stroke-width="1.500"><path d="M9 2Q3 2 3 8v4l-2 4h15l-2-4v-1M6 17q2 3 5 0M7 7h4l-4 5h4M12 2h4l-4 5h4"/></svg>
  </div>
</footer>
</body>
</html>
```

FILE: styles.css
```css
* { box-sizing: border-box; margin: 0; padding: 0; }
body { display: flex; flex-direction: column; height: 100vh; overflow: hidden; background: #fff; color: #0c0a09; font: 17px/25px "Segoe UI", "Noto Sans", "Open Sans", sans-serif; }
button { border: 0; background: none; font: inherit; color: inherit; display: grid; place-items: center; }
input, select { border: 0; background: none; font: inherit; color: inherit; outline: 0; }
ul { list-style: none; }
svg { flex: none; }
.defs { position: absolute; width: 0; height: 0; }
.icon { width: 25px; height: 25px; fill: none; stroke: currentColor; stroke-width: 2; stroke-linecap: round; stroke-linejoin: round; }
.icon.small { width: 20px; height: 20px; }
.icon.mini { width: 18px; height: 18px; }
.slate { color: #4a5568; }
.muted { color: #888; }

/* Browser frame */
.browser { flex: none; background: #d3e3fd; border-bottom: 2px solid #e0e2e4; }
.tabs { display: flex; align-items: center; height: 50px; padding-left: 8px; }
.tab-search { width: 35px; height: 34px; border-radius: 10px; background: #ebf1fc; }
.tab { display: flex; align-items: center; gap: 12px; width: 301px; height: 50px; padding: 0 18px; font-size: 14px; color: #3c4043; }
.tab-title { flex: 1; overflow: hidden; white-space: nowrap; }
.fade { -webkit-mask-image: linear-gradient(90deg, #000 85%, transparent); mask-image: linear-gradient(90deg, #000 85%, transparent); }
.divided { border-left: 2px solid #a8c7fa; border-image: linear-gradient(transparent 30%, #a8c7fa 30%, #a8c7fa 70%, transparent 70%) 1; padding-left: 12px; }
.tab.active { height: 43px; width: 290px; padding: 0 14px 7px 11px; align-self: flex-end; background: #fff; border-radius: 12px 12px 0 0; color: #1f1f1f; }
.new-tab { width: 52px; height: 50px; }
.window-controls { display: flex; margin-left: auto; }
.window-controls button { width: 57px; height: 48px; }
.toolbar { display: flex; align-items: center; gap: 14px; height: 57px; padding: 0 13px 0 12px; background: #fff; border-radius: 10px 10px 0 0; }
.toolbar > button { width: 31px; height: 31px; }
.omnibox { flex: 1; display: flex; align-items: center; height: 42px; margin: 0 3px 0 3px; padding: 0 20px 0 6px; border-radius: 21px; background: #ecf1fa; }
.omnibox input { flex: 1; margin-left: 9px; color: #3c4043; }
.site-info { width: 31px; height: 31px; border-radius: 50%; background: #fff; }
.toolbar > .profile { width: 25px; height: 25px; border-radius: 50%; background: #bf360c; color: #fff; font-size: 13px; }

/* Application */
.app { flex: 1; display: flex; min-height: 0; overflow: hidden; }
.sidebar { display: flex; flex-direction: column; flex: none; width: 320px; padding: 40px 20px; background: #2d3748; color: #fff; }
.brand { display: flex; align-items: center; gap: 15px; }
.brand-logo { display: grid; place-items: center; width: 76px; height: 80px; border-radius: 10px; background: #fff; }
.brand-name { font-size: 24px; line-height: 35px; font-weight: 700; }
.nav { display: grid; gap: 5px; margin-top: 41px; }
.nav a { display: flex; align-items: center; gap: 15px; height: 50px; padding: 0 20px; border-radius: 5px; font-size: 19px; color: #fff; text-decoration: none; }
.nav .current { background: #4299e1; }
.user { display: flex; align-items: center; gap: 10px; margin-top: auto; padding: 0 30px 14px 20px; }
.user-avatar { display: grid; place-items: center; width: 50px; height: 50px; border-radius: 50%; background: #f5f5f4; color: #fff; font-weight: 600; }
.user-info { flex: 1; display: grid; padding-top: 3px; line-height: 22px; }
.user-info strong { font-size: 16px; font-weight: 600; }
.user-info span { font-size: 15px; color: #cbd5e0; }
.main { flex: 1; min-width: 0; padding: 21px 19px 0 20px; }
h1 { font-size: 28px; line-height: 40px; font-weight: 700; }
.subtitle { font-size: 19px; line-height: 30px; color: #78808c; }
.filters { display: flex; align-items: center; gap: 10px; height: 81px; margin: 28px 0 21px; padding: 4px 20px 0; border-bottom: 1px solid #e2e5e9; border-radius: 10px 10px 0 0; box-shadow: 0 1px 3px #0000000d; font-size: 16px; }
.filters h2 { display: flex; align-items: center; gap: 10px; flex: 1; font-size: 21px; font-weight: 500; }
.filters label { font-weight: 600; }
.select { display: flex; align-items: center; justify-content: space-between; width: 160px; height: 40px; padding: 0 16px; border: 1px solid #e5e5e5; border-radius: 8px; }
.select select { appearance: none; }
.select .end { flex: 1; padding-right: 22px; text-align-last: right; }
.refresh { display: flex; align-items: center; gap: 5px; height: 40px; padding: 0 14px; border: 1px solid #e5e5e5; border-radius: 8px; font-weight: 600; }
.columns { display: flex; align-items: flex-start; gap: 19px; }
.map { position: relative; flex: 1; min-width: 0; border-radius: 8px 8px 0 0; overflow: hidden; }
.map-canvas { display: block; width: 100%; }
.land { fill: #f2efe9; }
.water { fill: #aad3df; }
.channel { fill: none; stroke: #aad3df; stroke-width: 4; }
.border path, .border ellipse { fill: none; stroke: #d3c0cc; stroke-width: 1.5; vector-effect: non-scaling-stroke; }
.zoom { position: absolute; top: 13px; right: 13px; border: 2px solid #82a8b3; border-radius: 5px; background: #fff; }
.zoom button { width: 37px; height: 37px; }
.zoom button + button { border-top: 1px solid #ccc; }
.panels { display: grid; gap: 20px; flex: none; width: 370px; }
.card { padding: 20px; border-radius: 10px; box-shadow: 0 1px 3px #0000000d; font-size: 16px; }
.card h3 { display: flex; align-items: center; gap: 5px; height: 31px; margin-bottom: 10px; font-size: 18px; font-weight: 600; }
.card ul { flex: 1; display: grid; align-content: start; gap: 20px; }
.card li { display: flex; align-items: center; height: 25px; }
.card b { margin-left: auto; font-weight: 600; }
.dot { width: 15px; height: 15px; margin-right: 10px; border-radius: 50%; }
.green { background: #22c55e; }
.red { background: #ef4444; }
.yellow { background: #eab308; }
.scroll-area { display: flex; height: 250px; }
.scrollbar { display: flex; flex-direction: column; align-items: center; width: 19px; padding: 5px 0; background: #fcfcfc; }
.scrollbar i { flex: none; }
.up, .down { width: 12px; height: 9px; background: #8b8b8b; clip-path: polygon(50% 0, 100% 100%, 0 100%); }
.down { margin-top: auto; clip-path: polygon(0 0, 100% 0, 50% 100%); }
.thumb { width: 11px; height: 150px; margin-top: 8px; border-radius: 6px; background: #8b8b8b; }
.thumb.short { height: 25px; }
.page { width: 20px; }
.page .thumb { height: 78%; }

/* Taskbar */
.taskbar { flex: none; display: grid; grid-template-columns: 1fr auto 1fr; align-items: center; height: 60px; border-top: 1px solid #3f3f3f; background: #202020; color: #fff; font-size: 14px; line-height: 20px; }
.weather { display: flex; gap: 13px; padding-left: 25px; }
.weather span { color: #c8c8c8; }
.weather-icon { position: relative; padding-top: 6px; }
.weather .badge { position: absolute; top: -2px; right: -8px; display: grid; place-items: center; width: 20px; height: 20px; border-radius: 50%; background: #c42b1c; color: #fff; font-size: 13px; }
.dock { display: flex; align-items: center; gap: 5px; }
.dock button { width: 50px; height: 50px; border-radius: 5px; }
.dock .open { background: #303030; }
.running { position: relative; }
.running::after { content: ""; position: absolute; bottom: 1px; width: 8px; height: 4px; border-radius: 2px; background: #999; }
.open::after { width: 20px; background: #4cc2ff; }
.search { display: flex; align-items: center; gap: 10px; width: 273px; height: 38px; margin-left: 3px; padding: 0 8px 0 14px; border-radius: 19px; background: #f3f3f3; }
.search input { flex: 1; min-width: 0; font-size: 16px; }
.search input::placeholder { color: #5c5c5c; }
.tray { display: flex; align-items: center; justify-content: flex-end; gap: 9px; padding-right: 24px; }
.tray .gap-l { margin-left: 10px; }
.lang { margin-left: 13px; font-size: 15px; text-align: center; }
.clock { margin: 0 3px 0 10px; font-size: 15px; text-align: right; }
```
